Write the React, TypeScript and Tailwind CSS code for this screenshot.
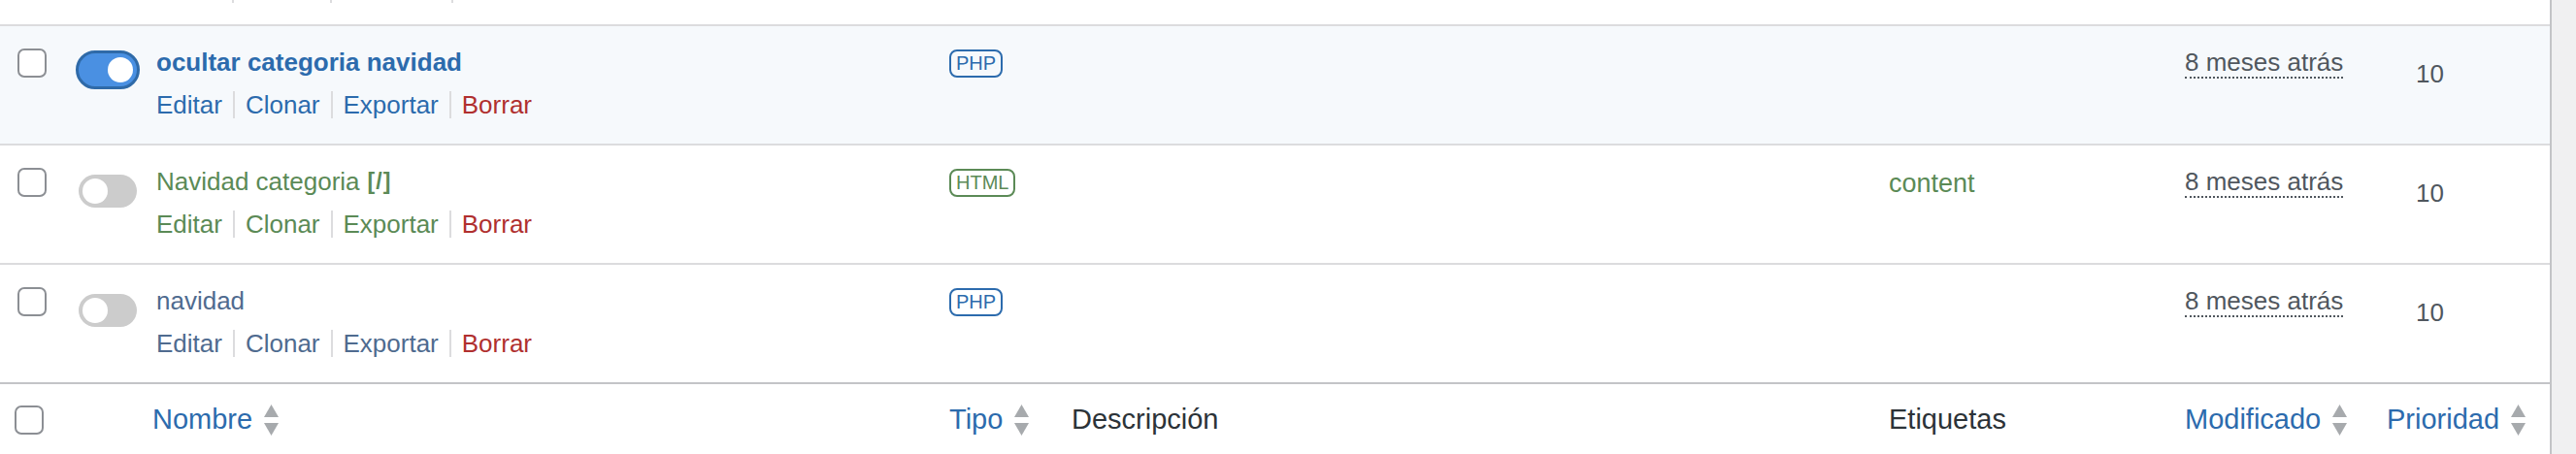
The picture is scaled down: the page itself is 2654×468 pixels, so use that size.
import React from "react"

type Snippet = {
  name: string
  type: "PHP" | "HTML"
  tags: string
  active: boolean
  shortcode?: boolean
}

const snippets: Snippet[] = [
  { name: "ocultar categoria navidad", type: "PHP", tags: "", active: true },
  { name: "Navidad categoria", type: "HTML", tags: "content", active: false, shortcode: true },
  { name: "navidad", type: "PHP", tags: "", active: false },
]

function Checkbox() {
  return <span className="block w-[30px] h-[30px] rounded-[7px] border-2 border-[#8c8f94] bg-white" />
}

function Toggle({ on }: { on: boolean }) {
  if (on) {
    return (
      <span className="flex items-center justify-end w-[66px] h-[40px] rounded-full bg-[#4a90e2] border-[3px] border-[#2f6aa8] px-[4px]">
        <span className="block w-[26px] h-[26px] rounded-full bg-white" />
      </span>
    )
  }
  return (
    <span className="flex items-center w-[60px] h-[34px] rounded-full bg-[#cccccc] px-[4px]">
      <span className="block w-[26px] h-[26px] rounded-full bg-white" />
    </span>
  )
}

function SortArrows() {
  return (
    <svg width="17" height="34" viewBox="0 0 17 34" className="ml-[11px] shrink-0">
      <path d="M8.5 1 L16 14 L1 14 Z" fill="#a7aaad" />
      <path d="M1 20 L16 20 L8.5 33 Z" fill="#a7aaad" />
    </svg>
  )
}

function Sep() {
  return <span className="inline-block w-[2px] h-[28px] bg-[#dcdcde] mx-[11px]" />
}

function Actions({ color }: { color: string }) {
  return (
    <div className="flex items-center h-[40px] text-[26px] leading-[40px]">
      <span className={color}>Editar</span>
      <Sep />
      <span className={color}>Clonar</span>
      <Sep />
      <span className={color}>Exportar</span>
      <Sep />
      <span className="text-[#b0302f]">Borrar</span>
    </div>
  )
}

function Row({ s }: { s: Snippet }) {
  const color = s.active ? "text-[#2c6bad]" : s.type === "HTML" ? "text-[#5b8a56]" : "text-[#4f6b8f]"
  const badge =
    s.type === "HTML"
      ? "text-[#5b8a56] border-[#5b8a56]"
      : "text-[#2c6bad] border-[#2c6bad]"

  return (
    <div className={`flex shrink-0 h-[123px] border-t-2 border-[#dcdcde] ${s.active ? "bg-[#f6f9fc]" : "bg-white"}`}>
      <div className="w-[78px] pl-[18px] pt-[23px]">
        <Checkbox />
      </div>
      <div className={`w-[83px] ${s.active ? "pt-[25px]" : "pt-[30px] pl-[3px]"}`}>
        <Toggle on={s.active} />
      </div>
      <div className="w-[817px] pt-[17px]">
        <div className={`flex items-center h-[40px] text-[26px] leading-[40px] ${color} ${s.active ? "font-bold" : ""}`}>
          {s.name}
          {s.shortcode && <span className="ml-[8px] text-[23px] font-bold tracking-[1px]">[/]</span>}
        </div>
        <div className="mt-[4px]">
          <Actions color={color} />
        </div>
      </div>
      <div className="w-[126px] pt-[24px]">
        <span className={`inline-block border-2 rounded-[8px] px-[5px] text-[20px] leading-[25px] ${badge}`}>
          {s.type}
        </span>
      </div>
      <div className="w-[842px]" />
      <div className={`w-[305px] pt-[19px] text-[27px] leading-[40px] ${color}`}>{s.tags}</div>
      <div className="w-[208px] pt-[17px] text-[26px] leading-[40px] text-[#50575e]">
        <span className="border-b-2 border-dotted border-[#50575e]">8 meses atrás</span>
      </div>
      <div className="flex-1 pt-[29px] pl-[30px] text-[26px] leading-[40px] text-[#50575e]">10</div>
    </div>
  )
}

export default function App() {
  return (
    <div className="flex w-[2654px] h-[468px] overflow-hidden bg-white font-['Liberation_Sans',Arial,sans-serif]">
      <div className="w-[2627px] flex flex-col">
        {/* bottom tips of the row above: action separators */}
        <div className="h-[25px] shrink-0 flex items-start pl-[239px]">
          <span className="w-[2px] h-[3px] bg-[#dcdcde]" />
          <span className="w-[2px] h-[3px] bg-[#dcdcde] ml-[99px]" />
          <span className="w-[2px] h-[3px] bg-[#dcdcde] ml-[123px]" />
        </div>

        {snippets.map((s) => (
          <Row key={s.name} s={s} />
        ))}

        <div className="flex shrink-0 items-center h-[80px] border-t-2 border-[#c3c4c7] text-[29px] pb-[4px]">
          <div className="w-[78px] pl-[15px]">
            <Checkbox />
          </div>
          <div className="w-[900px] pl-[79px] flex items-center">
            <span className="text-[#2c6bad]">Nombre</span>
            <SortArrows />
          </div>
          <div className="w-[126px] flex items-center">
            <span className="text-[#2c6bad]">Tipo</span>
            <SortArrows />
          </div>
          <div className="w-[842px] text-[#2c3338]">Descripción</div>
          <div className="w-[305px] text-[#2c3338]">Etiquetas</div>
          <div className="w-[208px] flex items-center">
            <span className="text-[#2c6bad]">Modificado</span>
            <SortArrows />
          </div>
          <div className="flex-1 flex items-center">
            <span className="text-[#2c6bad]">Prioridad</span>
            <SortArrows />
          </div>
        </div>
      </div>
      <div className="flex-1 bg-[#f0f0f1] border-l-2 border-[#c3c4c7]" />
    </div>
  )
}
